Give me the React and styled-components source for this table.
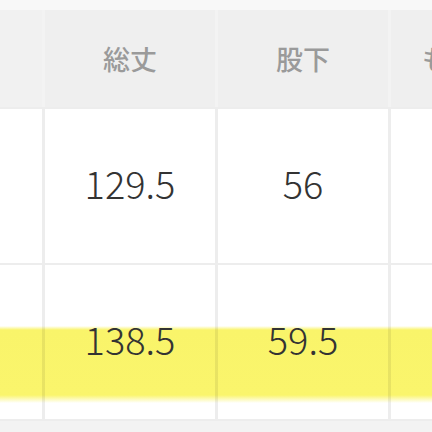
import styled, { createGlobalStyle } from 'styled-components'

const GlobalStyle = createGlobalStyle`
  html, body {
    margin: 0;
    padding: 0;
    background: #f3f3f3;
    overflow: hidden;
  }
`

const headers = ['', '総丈', '股下', 'もも周り']
const rows = [
  { values: ['', '129.5', '56', ''] },
  { values: ['', '138.5', '59.5', ''], highlight: true }
]

const widths = [42, 170, 170, 170]

export default function App() {
  return (
    <Page>
      <GlobalStyle />
      <Table>
        <HeaderRow>
          {headers.map((h, i) => (
            <HeaderCell key={i} $w={widths[i]} $first={i === 0}>
              {h}
            </HeaderCell>
          ))}
        </HeaderRow>
        {rows.map((row, r) => (
          <BodyRow key={r} $highlight={row.highlight}>
            {row.values.map((v, i) => (
              <Cell key={i} $w={widths[i]} $first={i === 0}>
                {v}
              </Cell>
            ))}
          </BodyRow>
        ))}
      </Table>
    </Page>
  )
}

const Page = styled.div`
  width: 432px;
  height: 432px;
  overflow: hidden;
  padding-top: 10px;
  box-sizing: border-box;
  background: linear-gradient(#f8f8f8 0, #f8f8f8 10px, #f3f3f3 10px);
`

const Table = styled.div`
  display: flex;
  flex-direction: column;
  width: max-content;
`

const HeaderRow = styled.div`
  display: flex;
  height: 97px;
  background: #efefef;
`

const HeaderCell = styled.div`
  flex: 0 0 ${p => p.$w}px;
  display: flex;
  align-items: center;
  justify-content: center;
  border-left: ${p => (p.$first ? 'none' : '3px solid #f3f3f3')};
  background: ${p => (p.$first ? '#f1f1f1' : '#efefef')};
  color: #9a9a9a;
  font-family: 'Noto Sans CJK JP', sans-serif;
  font-size: 27px;
  font-weight: 500;
  white-space: nowrap;
`

const BodyRow = styled.div`
  display: flex;
  height: 154px;
  border-top: 2px solid #ededed;
  background: ${p =>
    p.$highlight
      ? 'linear-gradient(#fff 0, #fff 61px, #f9f46a 65px, #faf56c 130px, #fff 138px)'
      : '#fff'};
  &:last-child {
    border-bottom: 2px solid #ededed;
  }
`

const Cell = styled.div`
  flex: 0 0 ${p => p.$w}px;
  display: flex;
  align-items: center;
  justify-content: center;
  padding-bottom: 8px;
  border-left: ${p => (p.$first ? 'none' : '3px solid rgba(0, 0, 0, 0.07)')};
  color: #333;
  font-family: 'Noto Sans CJK JP', sans-serif;
  font-size: 38px;
  font-weight: 300;
  white-space: nowrap;
`
